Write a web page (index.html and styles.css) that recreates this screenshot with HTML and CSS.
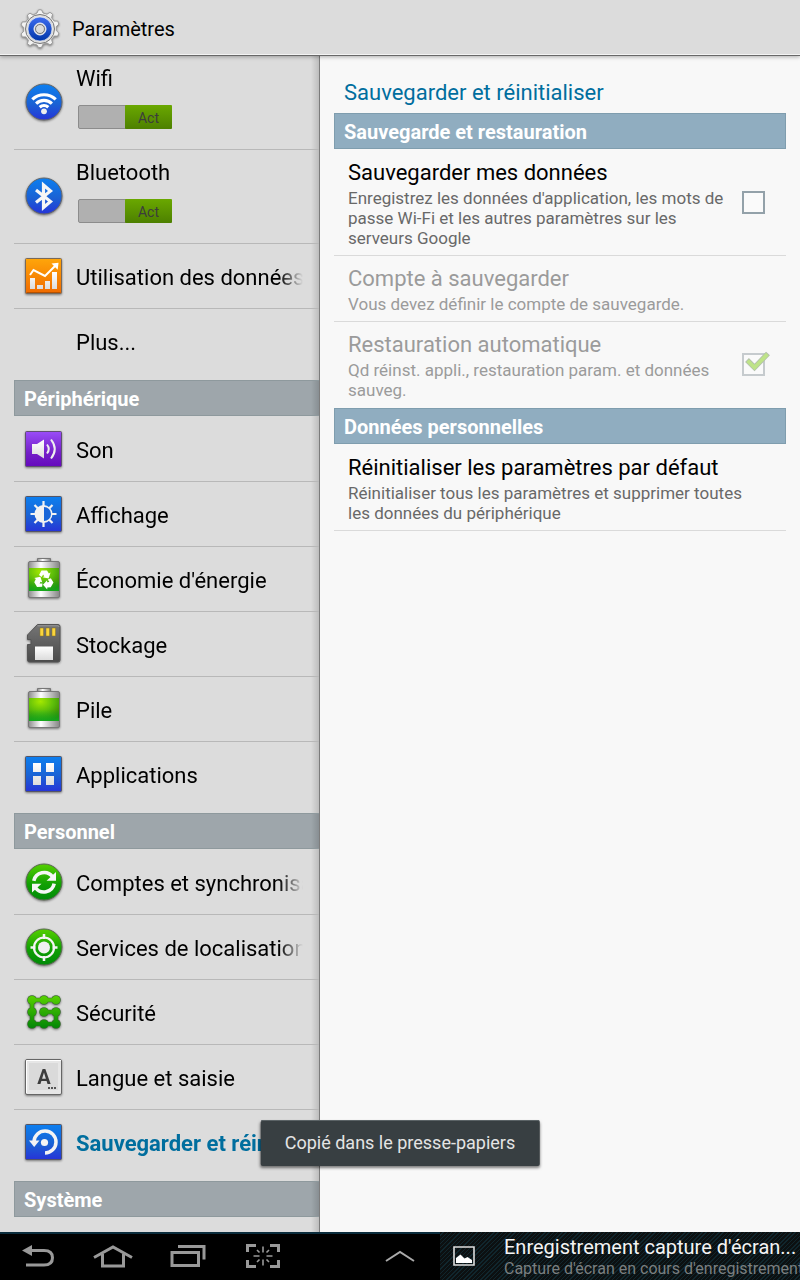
FILE: index.html
```html
<!DOCTYPE html>
<html lang="fr">
<head>
<meta charset="utf-8">
<meta name="viewport" content="width=device-width, initial-scale=1">
<title>Paramètres</title>
<link rel="stylesheet" href="styles.css">
</head>
<body>
<svg class="defs" aria-hidden="true">
  <defs>
    <linearGradient id="blue" x1="0" y1="0" x2="0" y2="1"><stop offset="0" stop-color="#0c7ff0"/><stop offset=".55" stop-color="#1a62d4"/><stop offset="1" stop-color="#2634d8"/></linearGradient>
    <linearGradient id="orange" x1="0" y1="0" x2="0" y2="1"><stop offset="0" stop-color="#ffa60a"/><stop offset="1" stop-color="#f06a00"/></linearGradient>
    <linearGradient id="purple" x1="0" y1="0" x2="0" y2="1"><stop offset="0" stop-color="#9a4df8"/><stop offset=".6" stop-color="#7420c8"/><stop offset="1" stop-color="#6509bd"/></linearGradient>
    <linearGradient id="green" x1="0" y1="0" x2="0" y2="1"><stop offset="0" stop-color="#55d000"/><stop offset=".55" stop-color="#12a004"/><stop offset="1" stop-color="#008a08"/></linearGradient>
    <linearGradient id="lockgreen" gradientUnits="userSpaceOnUse" x1="0" y1="3" x2="0" y2="36"><stop offset="0" stop-color="#5ad400"/><stop offset="1" stop-color="#028606"/></linearGradient>
    <linearGradient id="white" x1="0" y1="0" x2="0" y2="1"><stop offset="0" stop-color="#fff"/><stop offset="1" stop-color="#dcdcdc"/></linearGradient>
    <linearGradient id="metal" x1="0" y1="0" x2="1" y2="0"><stop offset="0" stop-color="#8c8c8c"/><stop offset=".4" stop-color="#fff"/><stop offset="1" stop-color="#858585"/></linearGradient>
    <radialGradient id="charge" cx=".38" cy=".15" r=".9"><stop offset="0" stop-color="#a4e800"/><stop offset=".5" stop-color="#5cbc0a"/><stop offset="1" stop-color="#2f7a00"/></radialGradient>
    <linearGradient id="glow" x1="0" y1="0" x2="0" y2="1"><stop offset=".5" stop-color="#00c030" stop-opacity="0"/><stop offset="1" stop-color="#08b828" stop-opacity=".7"/></linearGradient>
    <linearGradient id="card" x1="0" y1="0" x2="0" y2="1"><stop offset="0" stop-color="#757575"/><stop offset="1" stop-color="#4a4a4a"/></linearGradient>
    <linearGradient id="ring" x1="0" y1="0" x2="0" y2="1"><stop offset="0" stop-color="#3d6cf0"/><stop offset="1" stop-color="#0036a8"/></linearGradient>
  </defs>
</svg>

<header class="topbar">
  <svg class="icon" viewBox="0 0 40 40" aria-hidden="true">
    <g fill="#f2f2f2" stroke="#9a9a9a" stroke-width="1">
      <path d="M17 4 18.500 .8h3L23 4l4 1.200 3-1.900 2.600 2-1 3.500 2.600 3.300 3.500 0 1.200 3-2.600 2.500v4l2.600 2.500-1.200 3h-3.500l-2.600 3.300 1 3.500-2.600 2-3-1.900-4 1.200-1.500 3.400h-3L17 36l-4-1.200-3 1.900-2.600-2 1-3.500-2.600-3.300H2.300l-1.200-3 2.600-2.500v-4l-2.600-2.500 1.200-3h3.500l2.600-3.300-1-3.500 2.600-2 3 1.900z"/>
    </g>
    <circle cx="20" cy="20" r="14.500" fill="#dedede" stroke="#777"/>
    <circle cx="20" cy="20" r="12" fill="url(#ring)" stroke="#f6f6f6" stroke-width=".6"/>
    <circle cx="20" cy="20" r="6" fill="#c9cdd8" stroke="#f4f4f4"/>
    <circle cx="20" cy="20" r="4.500" fill="#dcdcdc" stroke="#777"/>
  </svg>
  <h1 class="topbar-title">Paramètres</h1>
</header>

<main class="panes">
  <nav class="sidebar" aria-label="Paramètres">
    <div class="item item-switch">
      <svg class="icon" viewBox="0 0 40 40" aria-hidden="true">
        <circle cx="20" cy="19" r="18" fill="url(#blue)" stroke="#666"/>
        <g fill="none" stroke="#fff" stroke-width="3.200"><path d="M8.300 16.400a17 17 0 0 1 23.400 0"/><path d="M12.100 20.600a11.500 11.500 0 0 1 15.800 0"/><path d="M15.700 24.200a6.500 6.500 0 0 1 8.600 0"/></g>
        <circle cx="20" cy="28.300" r="2.900" fill="#eee"/>
      </svg>
      <div class="item-body">
        <a class="item-label" href="#wifi">Wifi</a>
        <label class="switch"><input class="switch-input" type="checkbox" role="switch" aria-label="Wifi" checked><span class="switch-thumb">Act</span></label>
      </div>
    </div>
    <div class="item item-switch">
      <svg class="icon" viewBox="0 0 40 40" aria-hidden="true">
        <circle cx="20" cy="19" r="18" fill="url(#blue)" stroke="#666"/>
        <path d="M12 13 26.500 24.500 19.500 30.500V8L26.500 14 12 25.500" fill="none" stroke="#f6f6f6" stroke-width="3.200"/>
      </svg>
      <div class="item-body">
        <a class="item-label" href="#bluetooth">Bluetooth</a>
        <label class="switch"><input class="switch-input" type="checkbox" role="switch" aria-label="Bluetooth" checked><span class="switch-thumb">Act</span></label>
      </div>
    </div>
    <a class="item" href="#donnees">
      <svg class="icon" viewBox="0 0 40 40" aria-hidden="true">
        <rect x="1.500" y="2.500" width="36" height="35" rx="1" fill="url(#orange)" stroke="#78695a"/>
        <path d="M2.500 36.500h34" stroke="#b85200"/>
        <path d="M6 22h5v11H6zM13 29h6v4h-6zM21 25h5v8h-5zM28 16h5v17h-5z" fill="url(#white)"/>
        <path d="m6 19 3.500-5L21 20l10.500-10.500" fill="none" stroke="#fff" stroke-width="2"/><path d="m27.500 7.500 7-.8-.8 7z" fill="#fff"/>
      </svg>
      <span class="item-label">Utilisation des données</span>
    </a>
    <a class="item" href="#plus"><span class="icon"></span><span class="item-label">Plus...</span></a>

    <h2 class="section">Périphérique</h2>
    <a class="item" href="#son">
      <svg class="icon" viewBox="0 0 40 40" aria-hidden="true">
        <rect x="1.500" y="2.500" width="36" height="35" rx="1" fill="url(#purple)" stroke="#605070"/>
        <path d="M8 15h5l7-4.500v19L13 25H8z" fill="url(#white)"/>
        <g fill="none" stroke="#eee" stroke-width="2"><path d="M23 15.500q3.500 4.500 0 9"/><path d="M27 10.500q7.500 9.500 0 19"/></g>
      </svg>
      <span class="item-label">Son</span>
    </a>
    <a class="item" href="#affichage">
      <svg class="icon" viewBox="0 0 40 40" aria-hidden="true">
        <rect x="1.500" y="2.500" width="36" height="35" rx="1" fill="url(#blue)" stroke="#556"/>
        <path d="M19.500 7v26M6.500 20h26M10.500 11l18 18M28.500 11l-18 18" stroke="#f2f2f2" stroke-width="2.200"/>
        <circle cx="19.500" cy="20" r="9" fill="#f2f2f2"/><path d="M20 13a7 7 0 0 1 0 14z" fill="#1966d8"/>
      </svg>
      <span class="item-label">Affichage</span>
    </a>
    <a class="item" href="#economie">
      <svg class="icon" viewBox="0 0 40 40" aria-hidden="true">
        <path d="M13.500 2.500V-.5h13v3" fill="url(#metal)" stroke="#777"/>
        <rect x="4.500" y="2.500" width="31" height="36" rx="1.500" fill="url(#metal)" stroke="#777"/>
        <rect x="5" y="9" width="30" height="23" fill="url(#charge)"/><rect x="5" y="9" width="30" height="23" fill="url(#glow)"/>
        <g fill="#fff"><path id="arrow" d="M15 16 17.500 11.500h5.500l1.900 2.900 1.600-.9-1.900 6-6-1.300 1.700-1-1.200-1.800-1.400 2.500z"/><use href="#arrow" transform="rotate(120 20 21)"/><use href="#arrow" transform="rotate(240 20 21)"/></g>
      </svg>
      <span class="item-label">Économie d'énergie</span>
    </a>
    <a class="item" href="#stockage">
      <svg class="icon" viewBox="0 0 40 40" aria-hidden="true">
        <path d="M13.500 .5H34q2 0 2 2V36q0 2-2 2H5.500q-2 0-2-2V20.500h3.500v-5H3.500V11z" fill="url(#card)" stroke="#555"/>
        <path d="M13.500 1.800H34q.8 0 .8 1" fill="none" stroke="#999"/>
        <path d="M16 4h3.500v8H16zM22 4h3.500v8H22zM28 4h3.500v8H28z" fill="#fbd53c" stroke="#8a7420" stroke-width=".5"/>
        <path d="M11 22.500h18V36H11z" fill="url(#white)"/>
      </svg>
      <span class="item-label">Stockage</span>
    </a>
    <a class="item" href="#pile">
      <svg class="icon" viewBox="0 0 40 40" aria-hidden="true">
        <path d="M13.500 2.500V-.5h13v3" fill="url(#metal)" stroke="#777"/>
        <rect x="4.500" y="2.500" width="31" height="36" rx="1.500" fill="url(#metal)" stroke="#777"/>
        <rect x="5" y="9" width="30" height="23" fill="url(#charge)"/><rect x="5" y="9" width="30" height="23" fill="url(#glow)"/>
      </svg>
      <span class="item-label">Pile</span>
    </a>
    <a class="item" href="#applications">
      <svg class="icon" viewBox="0 0 40 40" aria-hidden="true">
        <rect x="1.500" y="2.500" width="36" height="35" rx="1" fill="url(#blue)" stroke="#556"/>
        <path d="M9 9h8v9H9zM22 9h8v9h-8zM9 22h8v9H9zM22 22h8v9h-8z" fill="url(#white)"/>
      </svg>
      <span class="item-label">Applications</span>
    </a>

    <h2 class="section">Personnel</h2>
    <a class="item" href="#comptes">
      <svg class="icon" viewBox="0 0 40 40" aria-hidden="true">
        <circle cx="20" cy="20" r="18" fill="url(#green)" stroke="#5a6a50"/>
        <g fill="none" stroke="#f6f6f6" stroke-width="3.600"><path d="M9.800 18.800a10.500 10.500 0 0 1 18.700-4"/><path d="M30.200 21.700a10.500 10.500 0 0 1-18.700 4"/></g>
        <path d="M32 10v8.700h-9.500zM8 30.500V21.800h9.500z" fill="#f6f6f6"/>
      </svg>
      <span class="item-label">Comptes et synchronisation</span>
    </a>
    <a class="item" href="#localisation">
      <svg class="icon" viewBox="0 0 40 40" aria-hidden="true">
        <circle cx="20" cy="20" r="18" fill="url(#green)" stroke="#5a6a50"/>
        <circle cx="20" cy="20.500" r="10" fill="none" stroke="#f4f4f4" stroke-width="2.200"/>
        <path d="M20 7v5M20 29v5M6.500 20.500h5M28.500 20.500h5" stroke="#f4f4f4" stroke-width="2.500"/>
        <circle cx="20" cy="20.500" r="6" fill="#f0f0f0"/>
      </svg>
      <span class="item-label">Services de localisation</span>
    </a>
    <a class="item" href="#securite">
      <svg class="icon" viewBox="0 0 40 40" aria-hidden="true">
        <g fill="#3b6a30"><circle cx="8" cy="8" r="4.800"/><circle cx="20" cy="8" r="4.800"/><circle cx="32" cy="8" r="4.800"/><circle cx="8" cy="20" r="4.800"/><circle cx="20" cy="20" r="4.800"/><circle cx="32" cy="20" r="4.800"/><circle cx="8" cy="32" r="4.800"/><circle cx="20" cy="32" r="4.800"/><circle cx="32" cy="32" r="4.800"/></g>
        <path d="M32 8H8v24h24V20H20" fill="none" stroke="#3b6a30" stroke-width="4.600"/>
        <path d="M32 8H8v24h24V20H20" fill="none" stroke="url(#lockgreen)" stroke-width="3.400"/>
        <g fill="url(#lockgreen)"><circle cx="8" cy="8" r="4.100"/><circle cx="20" cy="8" r="4.100"/><circle cx="32" cy="8" r="4.100"/><circle cx="8" cy="20" r="4.100"/><circle cx="20" cy="20" r="4.100"/><circle cx="32" cy="20" r="4.100"/><circle cx="8" cy="32" r="4.100"/><circle cx="20" cy="32" r="4.100"/><circle cx="32" cy="32" r="4.100"/></g>
      </svg>
      <span class="item-label">Sécurité</span>
    </a>
    <a class="item" href="#langue">
      <svg class="icon" viewBox="0 0 40 40" aria-hidden="true">
        <rect x="1.500" y="2.500" width="36" height="35" rx="1.500" fill="#e6e6e6" stroke="#666"/>
        <path d="M2.500 36V3.500H37" fill="none" stroke="#fff"/>
        <rect x="5" y="6" width="29" height="27" fill="#dadada"/>
        <text class="key-letter" x="20" y="27" text-anchor="middle">A</text>
        <path d="M24 30h2v2h-2zM27 30h2v2h-2zM30 30h2v2h-2z" fill="#555"/>
      </svg>
      <span class="item-label">Langue et saisie</span>
    </a>
    <a class="item item-current" href="#sauvegarder" aria-current="page">
      <svg class="icon" viewBox="0 0 40 40" aria-hidden="true">
        <rect x="1.500" y="2.500" width="36" height="35" rx="1" fill="url(#blue)" stroke="#556"/>
        <path d="M10 19.500a11 11 0 1 1 11 11.500" fill="none" stroke="#f4f4f4" stroke-width="3.500"/>
        <path d="M5 18.500h10.500L10.200 25z" fill="#f4f4f4"/><circle cx="20.500" cy="20.500" r="3.600" fill="#f4f4f4"/>
      </svg>
      <span class="item-label">Sauvegarder et réinitialiser</span>
    </a>

    <h2 class="section">Système</h2>
  </nav>

  <section class="detail">
    <h2 class="detail-title">Sauvegarder et réinitialiser</h2>
    <h3 class="section section-blue">Sauvegarde et restauration</h3>
    <div class="pref">
      <div class="pref-text">
        <label class="pref-title" for="backup">Sauvegarder mes données</label>
        <p class="pref-desc">Enregistrez les données d'application, les mots de passe Wi-Fi et les autres paramètres sur les serveurs Google</p>
      </div>
      <span class="check"><input class="check-box" type="checkbox" id="backup"></span>
    </div>
    <div class="pref pref-disabled">
      <div class="pref-text">
        <h4 class="pref-title">Compte à sauvegarder</h4>
        <p class="pref-desc">Vous devez définir le compte de sauvegarde.</p>
      </div>
    </div>
    <div class="pref pref-disabled pref-last">
      <div class="pref-text">
        <label class="pref-title" for="restore">Restauration automatique</label>
        <p class="pref-desc">Qd réinst. appli., restauration param. et données sauveg.</p>
      </div>
      <span class="check">
        <input class="check-box" type="checkbox" id="restore" checked disabled>
        <svg class="check-mark" viewBox="0 0 28 26" aria-hidden="true"><path d="m5 9 7.500 7.500L26 2.500" fill="none" stroke="#b3bfae" stroke-width="5.400"/><path d="m5.600 9.600 6.900 6.900L25.400 3.100" fill="none" stroke="#bee388" stroke-width="3.800"/></svg>
      </span>
    </div>
    <h3 class="section section-blue">Données personnelles</h3>
    <div class="pref">
      <div class="pref-text">
        <h4 class="pref-title">Réinitialiser les paramètres par défaut</h4>
        <p class="pref-desc">Réinitialiser tous les paramètres et supprimer toutes les données du périphérique</p>
      </div>
    </div>
  </section>
</main>

<footer class="sysbar">
  <div class="sysbar-keys">
    <button class="key" type="button" aria-label="Retour"><svg width="32" height="24" viewBox="0 0 32 24"><path d="M8 6.500h14q8.500 0 8.500 7.200T22 21H4" fill="none" stroke="#999" stroke-width="3"/><path d="M0 6.500 10 1v11z" fill="#999"/></svg></button>
    <button class="key" type="button" aria-label="Accueil"><svg width="40" height="24" viewBox="0 0 40 24"><path d="M1 13.500 20 3l19 10.500M9.500 10v12h21V10" fill="none" stroke="#999" stroke-width="3"/></svg></button>
    <button class="key" type="button" aria-label="Applications récentes"><svg width="36" height="24" viewBox="0 0 36 24"><path d="M2 8.500h26.500v13H2zM8 2.500h26v13" fill="none" stroke="#999" stroke-width="3"/></svg></button>
    <button class="key" type="button" aria-label="Capture d'écran"><svg width="34" height="24" viewBox="0 0 34 24"><path d="M1.500 8V1.500H10M24 1.500h8.500V8M32.500 16v6.500H24M10 22.500H1.500V16" fill="none" stroke="#999" stroke-width="3"/><path d="M17 2.500v6M17 15.500v6M7.500 12h6M20.500 12h6M11 6l2.500 2.500M23 6l-2.500 2.500M11 18l2.500-2.500M23 18l-2.500-2.500" stroke="#999" stroke-width="1.600"/></svg></button>
    <button class="key key-caret" type="button" aria-label="Ouvrir la barre"><svg width="30" height="12" viewBox="0 0 30 12"><path d="M1 11 15 2l14 9" fill="none" stroke="#aaa" stroke-width="2"/></svg></button>
  </div>
  <div class="notice">
    <svg class="notice-icon" width="22" height="20" viewBox="0 0 22 20" aria-hidden="true"><path d="M1 1h20v18H1z" fill="none" stroke="#ddd" stroke-width="1.600"/><path d="M3 17v-5l4.500-3.500 4 4 3-1.500 4.500 3v3z" fill="#fff"/></svg>
    <div class="notice-text">
      <p class="notice-title">Enregistrement capture d'écran...</p>
      <p class="notice-sub">Capture d'écran en cours d'enregistrement</p>
    </div>
  </div>
</footer>

<div class="toast" role="status">Copié dans le presse-papiers</div>
</body>
</html>
```
FILE: styles.css
```css
* {
  box-sizing: border-box;
}

body {
  margin: 0;
  min-height: 100vh;
  display: flex;
  flex-direction: column;
  position: relative;
  background: #dcdcdc;
  color: #000;
  font-family: Roboto, "Noto Sans", sans-serif;
  font-size: 22px;
}

h1, h2, h3, h4, p {
  margin: 0;
  font-weight: 400;
}

a {
  color: inherit;
  text-decoration: none;
}

.defs {
  position: absolute;
  width: 0;
  height: 0;
}

.icon {
  flex: none;
  width: 40px;
  height: 40px;
  overflow: visible;
}

svg.icon {
  filter: drop-shadow(0 1px 1px rgba(0, 0, 0, .45));
}

.topbar {
  display: flex;
  align-items: center;
  gap: 12px;
  padding: 2px 20px 0;
  height: 56px;
  border-bottom: 1px solid #686868;
  box-shadow: inset 0 -1px #f4f4f4, 0 1px 4px rgba(0, 0, 0, .3);
  z-index: 1;
}

.topbar-title {
  font-size: 20px;
  line-height: 28px;
}

.panes {
  flex: 1;
  display: flex;
}

.sidebar {
  width: 40%;
  padding-left: 14px;
  border-right: 1px solid #7c7c7c;
  background: linear-gradient(to left, rgba(0, 0, 0, .14), transparent 8px);
}

.item {
  display: flex;
  align-items: center;
  gap: 12px;
  height: 65px;
  padding: 0 16px 0 10px;
  border-bottom: 1px solid #b8b8b8;
}

.item:has(+ .section) {
  border-bottom-color: transparent;
}

.item-label {
  flex: 1;
  min-width: 0;
  overflow: hidden;
  white-space: nowrap;
  line-height: 28px;
  padding-top: 4px;
  -webkit-mask-image: linear-gradient(to left, transparent, #000 24px);
  mask-image: linear-gradient(to left, transparent, #000 24px);
}

.item-current {
  color: #006e9e;
  font-weight: 700;
}

.item-switch {
  height: 94px;
}

.item-body {
  flex: 1;
  align-self: flex-start;
  display: flex;
  flex-direction: column;
  gap: 12px;
  padding-top: 5px;
}

.switch {
  position: relative;
  display: flex;
  justify-content: flex-end;
  width: 94px;
  height: 24px;
  margin-left: 2px;
}

.switch-input {
  appearance: none;
  position: absolute;
  inset: 0;
  margin: 0;
  background: #b0b0b0;
  border: 1px solid #8c8c8c;
  border-radius: 2px;
}

.switch-thumb {
  position: relative;
  width: 50%;
  background: linear-gradient(#6aa800, #4d8000);
  border-radius: 1px;
  color: #3c3c3c;
  font-size: 14px;
  line-height: 26px;
  text-align: center;
}

.section {
  height: 36px;
  margin: 6px 0 1px;
  padding: 0 9px;
  border: 1px solid #8e999d;
  border-right: 0;
  background: linear-gradient(to left, rgba(0, 0, 0, .14), transparent 8px) #9ea6ab;
  color: #fff;
  font-size: 20px;
  font-weight: 700;
  line-height: 36px;
}

.section-blue {
  margin: 0 0 1px;
  border: 1px solid #7f9dae;
  background: #90adc0;
}

.detail {
  flex: 1;
  padding: 0 14px;
  background: #f8f8f8;
}

.detail-title {
  padding: 21px 10px 4px;
  color: #006e9e;
  font-size: 22px;
  line-height: 32px;
}

.pref {
  display: flex;
  align-items: center;
  gap: 8px;
  padding: 8px 21px 8px 14px;
  border-bottom: 1px solid #dadada;
}

.pref-last {
  border-bottom-color: transparent;
}

.pref-text {
  flex: 1;
}

.pref-title {
  display: block;
  line-height: 29px;
  padding-bottom: 1px;
}

.pref-desc {
  margin-bottom: -1px;
  color: #686868;
  font-size: 17px;
  line-height: 20px;
}

.pref-disabled .pref-title,
.pref-disabled .pref-desc {
  color: #9b9b9b;
}

.check {
  position: relative;
  display: flex;
}

.check-box {
  appearance: none;
  width: 23px;
  height: 23px;
  margin: 0;
  border: 2px solid #93a1a9;
  background: #fafafa;
}

.check-box:disabled {
  border-color: #c6cbce;
}

.check-mark {
  position: absolute;
  left: 0;
  top: -2px;
  width: 28px;
  height: 26px;
}

.key-letter {
  fill: #3c3c3c;
  font-size: 20px;
  font-weight: 700;
}

.sysbar {
  display: flex;
  height: 48px;
  background: #000;
}

.sysbar-keys {
  flex: 1;
  display: flex;
  padding-bottom: 2px;
  border-top: 2px solid #0a2c3c;
}

.key {
  display: flex;
  align-items: center;
  justify-content: center;
  width: 75px;
  padding: 0;
  border: 0;
  background: none;
}

.key-caret {
  width: 80px;
  margin-left: auto;
}

.notice {
  display: flex;
  align-items: center;
  gap: 29px;
  width: 45%;
  padding-left: 13px;
  overflow: hidden;
  background: repeating-linear-gradient(135deg, #0c1011 0 2px, #10262d 2px 3px);
}

.notice-icon {
  flex: none;
}

.notice-text {
  padding-top: 2px;
  white-space: nowrap;
}

.notice-title {
  color: #f4f4f4;
  font-size: 20px;
  line-height: 24px;
}

.notice-sub {
  color: #7a7f80;
  font-size: 16px;
  line-height: 20px;
}

.toast {
  position: absolute;
  left: 50%;
  bottom: 114px;
  transform: translateX(-50%);
  padding: 0 24px;
  border-radius: 2px;
  background: #383f42;
  box-shadow: inset 0 1px #5b6366, 0 2px 3px rgba(0, 0, 0, .5);
  color: #e4e4e4;
  font-size: 18px;
  line-height: 46px;
  white-space: nowrap;
}
```
